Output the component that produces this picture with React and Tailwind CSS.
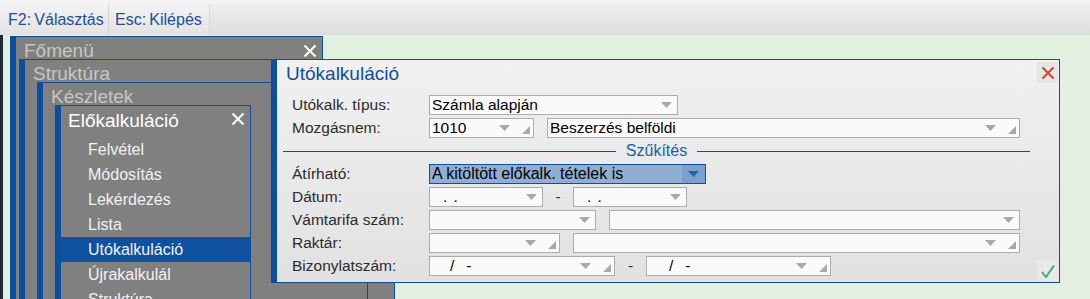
import React from 'react'

const BLUE = 'border-[#0b4f9f]'

const XIcon = ({ color = '#ffffff', size = 14 }) => (
  <svg width={size} height={size} viewBox="0 0 14 14">
    <path d="M1.5 1.5 L12.5 12.5 M12.5 1.5 L1.5 12.5" stroke={color} strokeWidth="2" fill="none" />
  </svg>
)

const Arrow = ({ color = '#a9a9a9' }) => (
  <svg width="11" height="6" viewBox="0 0 11 6">
    <path d="M0 0 H11 L5.5 6 Z" fill={color} />
  </svg>
)

const Corner = () => (
  <svg width="8" height="8" viewBox="0 0 8 8" className="self-end mb-[3px] ml-[12px] mr-[3px]">
    <path d="M8 0 V8 H0 Z" fill="#a9a9a9" />
  </svg>
)

// legördülő mező
const Sel = ({ className, children, corner }) => (
  <div className={`flex items-center h-[20px] border border-[#acacac] bg-[#fafafa] shrink-0 ${className}`}>
    <div className="flex-1 pl-[2px] text-[15.5px] text-black whitespace-nowrap overflow-hidden leading-none">{children}</div>
    <div className={corner ? '' : 'mr-[5px]'}>
      <Arrow />
    </div>
    {corner && <Corner />}
  </div>
)

const Row = ({ label, children }) => (
  <div className="flex items-center h-[20px]">
    <div className="w-[137px] shrink-0 text-[15.5px] text-[#2b2b2b] leading-none">{label}</div>
    <div className="flex items-center">{children}</div>
  </div>
)

const Dash = ({ className }) => (
  <div className={`text-[15.5px] text-[#2b2b2b] text-center leading-none ${className}`}>-</div>
)

const menuItems = ['Felvétel', 'Módosítás', 'Lekérdezés', 'Lista', 'Utókalkuláció', 'Újrakalkulál', 'Struktúra']

const App = () => {
  return (
    <div className="w-[1090px] h-[299px] overflow-hidden flex flex-col bg-[#e3efdf] font-['Liberation_Sans',Arial,sans-serif]">
      <div className="h-[4px] bg-[#f4f4f4] shrink-0" />
      <div className="h-[31px] shrink-0 flex bg-linear-to-b from-[#efefef] to-[#dcdcdc]">
        <div className="w-[109px] flex items-center pl-[8px] text-[16px] text-[#1c4f9c] border-r border-[#d4d4d4] bg-linear-to-b from-[#f3f3f3] to-[#e2e2e2]">
          F2:&thinsp;Választás
        </div>
        <div className="w-[101px] flex items-center pl-[6px] text-[16px] text-[#1c4f9c] border-r border-[#d8d8d8] bg-linear-to-b from-[#f3f3f3] to-[#e2e2e2]">
          Esc:&thinsp;Kilépés
        </div>
      </div>

      <div className="relative flex-1">
        <div className="absolute left-0 top-0 bottom-0 w-[3px] bg-[#1f2b3a]" />

        {/* Főmenü */}
        <div className={`absolute left-[10px] top-[1px] w-[313px] h-[300px] bg-[#808080] border-l-[6px] border-t border-r ${BLUE}`}>
          <div className="flex justify-between">
            <div className="pl-[8px] pt-[3px] text-[19px] text-[#c6c6c6] leading-[22px]">Főmenü</div>
            <div className="pt-[7px] pr-[5px]"><XIcon /></div>
          </div>
        </div>

        {/* Struktúra */}
        <div className={`absolute left-[19px] top-[24px] w-[376px] h-[300px] bg-[#808080] border-l-[6px] border-t border-r ${BLUE}`}>
          <div className="pl-[8px] pt-[3px] text-[19px] text-[#c6c6c6] leading-[22px]">Struktúra</div>
        </div>

        {/* Készletek */}
        <div className={`absolute left-[37px] top-[47px] w-[331px] h-[300px] bg-[#808080] border-l-[6px] border-t border-r ${BLUE}`}>
          <div className="pl-[8px] pt-[3px] text-[19px] text-[#c6c6c6] leading-[22px]">Készletek</div>
        </div>

        {/* Előkalkuláció */}
        <div className={`absolute left-[55px] top-[70px] w-[196px] h-[300px] bg-[#808080] border-l-[6px] border-t border-r ${BLUE}`}>
          <div className="h-[31px] flex justify-between">
            <div className="pl-[7px] pt-[4px] text-[19px] text-white leading-[22px]">Előkalkuláció</div>
            <div className="pt-[6px] pr-[5px]"><XIcon /></div>
          </div>
          {menuItems.map((item, i) => (
            <div
              key={item}
              className={`h-[25px] flex items-center justify-between pl-[27px] pr-[4px] text-[16px] text-[#f2f2f2] ${i === 4 ? 'bg-[#0f51a0]' : ''}`}
            >
              <span>{item}</span>
              {i === 6 && (
                <svg width="7" height="9" viewBox="0 0 7 9" className="mt-[16px]">
                  <path d="M0 0 L7 4.5 L0 9 Z" fill="#f2f2f2" />
                </svg>
              )}
            </div>
          ))}
        </div>

        {/* Utókalkuláció párbeszéd */}
        <div className={`absolute left-[271px] top-[24px] w-[789px] h-[224px] border border-l-[6px] ${BLUE} bg-linear-to-b from-[#f1f1f1] to-[#e1e1e1]`}>
          <div className="h-[35px] flex justify-between">
            <div className="pl-[9px] pt-[3px] text-[19px] text-[#0f4f9f] leading-[22px]">Utókalkuláció</div>
            <div className="mt-[2px] mr-[1px] w-[21px] h-[21px] bg-[#e6e6e6] flex items-center justify-center">
              <XIcon color="#d8432f" size={14} />
            </div>
          </div>

          <div className="pl-[15px] flex flex-col gap-[3px]">
            <Row label="Utókalk. típus:">
              <Sel className="w-[249px]">Számla alapján</Sel>
            </Row>
            <Row label="Mozgásnem:">
              <Sel className="w-[105px]" corner>1010</Sel>
              <Sel className="w-[473px] ml-[13px]" corner>Beszerzés belföldi</Sel>
            </Row>
          </div>

          <div className="h-[26px] flex items-center ml-[6px] mr-[29px]">
            <div className="flex-1 h-px bg-[#0f4f9f]" />
            <div className="px-[10px] text-[16px] text-[#1a5cab] leading-none">Szűkítés</div>
            <div className="flex-1 h-px bg-[#0f4f9f]" />
          </div>

          <div className="pl-[15px] flex flex-col gap-[3px]">
            <Row label="Átírható:">
              <div className="w-[277px] h-[20px] flex items-center border border-[#0f4f9f] bg-[#90aed2]">
                <div className="flex-1 pl-[2px] text-[16px] text-black leading-none whitespace-nowrap">A kitöltött előkalk. tételek is</div>
                <div className="w-[23px] h-full flex items-center justify-center bg-[#7c9fcb]">
                  <Arrow color="#2462b2" />
                </div>
              </div>
            </Row>
            <Row label="Dátum:">
              <Sel className="w-[114px]"><span className="pl-[11px] tracking-[1px]">. .</span></Sel>
              <Dash className="w-[30px]" />
              <Sel className="w-[114px]"><span className="pl-[11px] tracking-[1px]">. .</span></Sel>
            </Row>
            <Row label="Vámtarifa szám:">
              <Sel className="w-[167px]" />
              <Sel className="w-[411px] ml-[13px]" />
            </Row>
            <Row label="Raktár:">
              <Sel className="w-[131px]" corner />
              <Sel className="w-[447px] ml-[13px]" corner />
            </Row>
            <Row label="Bizonylatszám:">
              <Sel className="w-[186px]" corner>
                <span className="pl-[18px]">/</span>
                <span className="pl-[12px]">-</span>
              </Sel>
              <Dash className="w-[31px]" />
              <Sel className="w-[185px]" corner>
                <span className="pl-[20px]">/</span>
                <span className="pl-[12px]">-</span>
              </Sel>
            </Row>
          </div>

          <div className="absolute right-[1px] bottom-[1px] w-[21px] h-[21px] bg-[#e9e9e9] flex items-center justify-center">
            <svg width="14" height="14" viewBox="0 0 14 14">
              <path d="M1 8 L5 13 L13 1.5" stroke="#4aa876" strokeWidth="2" fill="none" />
            </svg>
          </div>
        </div>
      </div>
    </div>
  )
}

export default App
